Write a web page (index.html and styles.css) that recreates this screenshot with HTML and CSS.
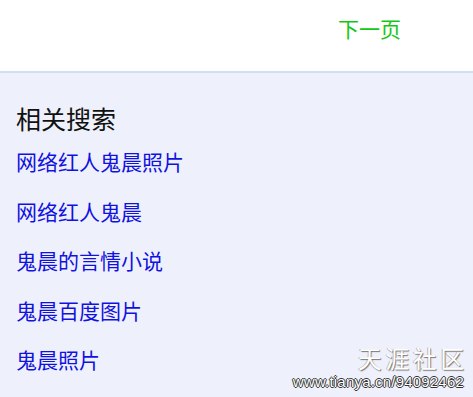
FILE: index.html
```html
<!DOCTYPE html>
<html lang="zh-CN">
<head>
<meta charset="utf-8">
<link rel="stylesheet" href="styles.css">
</head>
<body>
<div class="page">
  <header class="pager">
    <a class="next" href="#">下一页</a>
  </header>
  <section class="related">
    <h2 class="title">相关搜索</h2>
    <ul class="links">
      <li><a href="#">网络红人鬼晨照片</a></li>
      <li><a href="#">网络红人鬼晨</a></li>
      <li><a href="#">鬼晨的言情小说</a></li>
      <li><a href="#">鬼晨百度图片</a></li>
      <li><a href="#">鬼晨照片</a></li>
    </ul>
  </section>
  <div class="watermark">
    <div class="wm-name">天涯社区</div>
    <div class="wm-url">www.tianya.cn/94092462</div>
  </div>
</div>
</body>
</html>
```
FILE: styles.css
```css
html, body {
  margin: 0;
  padding: 0;
}
body {
  font-family: "Noto Sans CJK SC", "Noto Sans", sans-serif;
  background: #eef1fb;
  width: 473px;
  height: 397px;
  overflow: hidden;
}
.page {
  position: relative;
  height: 397px;
}
.pager {
  background: #ffffff;
  height: 73px;
  border-bottom: 2px solid #cfe0f4;
  display: flex;
  justify-content: flex-end;
  align-items: flex-start;
  padding-right: 72px;
  box-sizing: border-box;
}
.next {
  color: #12c812;
  text-decoration: none;
  font-size: 21px;
  line-height: 24px;
  margin-top: 16px;
}
.related {
  padding: 0 16px;
}
.title {
  margin: 0;
  padding-top: 28px;
  font-size: 25px;
  font-weight: normal;
  line-height: 34px;
  color: #111111;
}
.links {
  list-style: none;
  margin: 0;
  padding: 14px 0 0;
}
.links li {
  height: 49.5px;
  line-height: 24px;
}
.links a {
  color: #1212e0;
  text-decoration: none;
  font-size: 21px;
}
.watermark {
  position: absolute;
  right: 9px;
  bottom: 7px;
  text-align: right;
  color: #ffffff;
}
.wm-name {
  font-size: 23.5px;
  letter-spacing: 4px;
  margin-right: -4px;
  line-height: 30px;
  text-shadow: 1px 1px 1px #777, -1px 0 0 #bbb;
}
.wm-url {
  font-family: "Liberation Sans", sans-serif;
  font-size: 15px;
  letter-spacing: 0.2px;
  line-height: 17px;
  text-shadow: 1px 0 0 #333, -1px 0 0 #333, 0 1px 0 #333, 0 -1px 0 #333;
}
```
